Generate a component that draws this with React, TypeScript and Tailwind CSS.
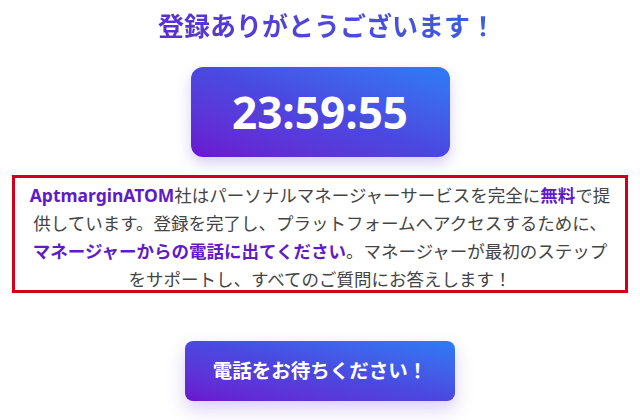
import React from 'react';

const jp = "font-['Noto_Sans','Noto_Sans_CJK_JP',sans-serif]";

const Hi: React.FC<{ children: React.ReactNode }> = ({ children }) => (
  <b className="text-[#5f1bc7] font-bold">{children}</b>
);

const App: React.FC = () => {
  return (
    <div className={`w-[640px] h-[420px] bg-white flex flex-col items-center ${jp}`}>
      <h1 className="mt-[9px] pl-[14px] text-[26px] leading-[34px] font-bold bg-gradient-to-r from-[#5a2bd0] to-[#3a5fe0] bg-clip-text text-transparent">
        登録ありがとうございます！
      </h1>

      <div className="mt-[24px] w-[259px] h-[90px] rounded-[12px] bg-gradient-to-tr from-[#6a14d0] via-[#4a48e0] to-[#2a7cf6] shadow-[0_6px_14px_rgba(90,60,200,0.25)] flex items-center justify-center">
        <span className="text-white text-[44px] font-bold font-['Open_Sans',sans-serif]">23:59:55</span>
      </div>

      <div className="mt-[18px] w-[616px] h-[118px] border-[3px] border-[#d0021b] pt-[3px] text-center text-[17.5px] leading-[28px] text-[#444] whitespace-nowrap">
        <Hi>AptmarginATOM</Hi>社はパーソナルマネージャーサービスを完全に<Hi>無料</Hi>で提<br />
        供しています。登録を完了し、プラットフォームへアクセスするために、<br />
        <Hi>マネージャーからの電話に出てください</Hi>。マネージャーが最初のステップ<br />
        をサポートし、すべてのご質問にお答えします！
      </div>

      <button className="mt-[48px] w-[270px] h-[60px] rounded-[8px] bg-gradient-to-tr from-[#6a14d0] via-[#4a48e0] to-[#2a7cf6] shadow-[0_8px_18px_rgba(110,60,220,0.25)] text-white text-[19.5px] font-bold">
        電話をお待ちください！
      </button>
    </div>
  );
};

export default App;
